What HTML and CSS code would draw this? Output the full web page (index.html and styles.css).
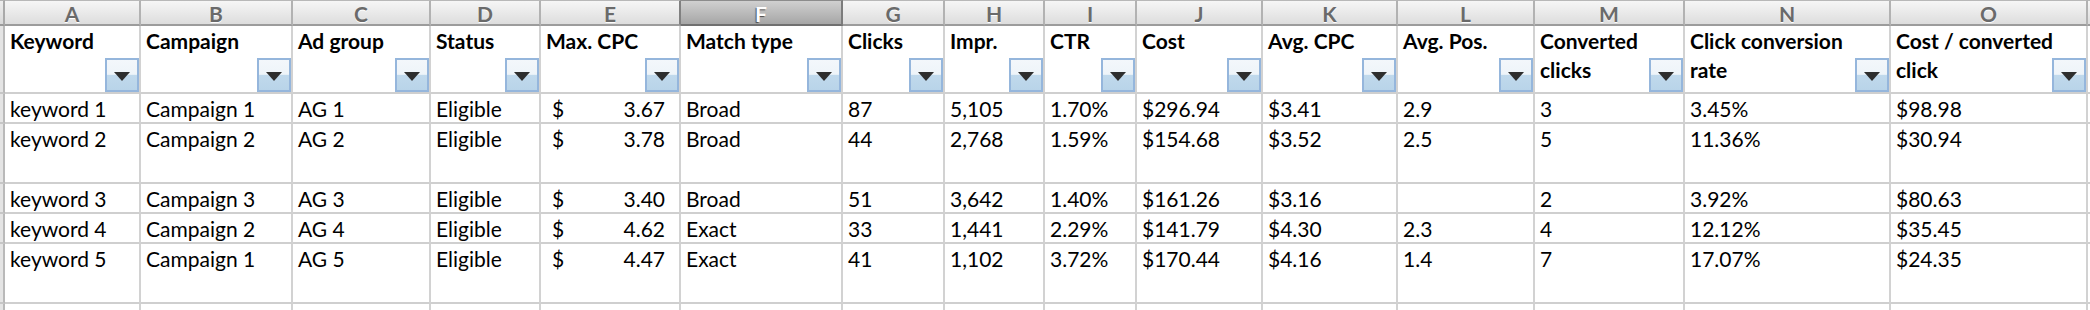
FILE: index.html
```html
<!DOCTYPE html>
<html>
<head>
<meta charset="utf-8">
<link rel="stylesheet" href="styles.css">
<title>Keywords</title>
</head>
<body>
<div class="sheet">
  <!-- column letters -->
  <div class="corner"></div>
  <div class="L">A</div><div class="L">B</div><div class="L">C</div><div class="L">D</div><div class="L pre">E</div>
  <div class="L sel">F</div><div class="L">G</div><div class="L">H</div><div class="L">I</div><div class="L">J</div>
  <div class="L">K</div><div class="L">L</div><div class="L">M</div><div class="L">N</div><div class="L">O</div><div class="L end"></div>

  <!-- header row -->
  <div class="s"></div>
  <div class="h"><span class="ht">Keyword</span><span class="dd"><svg width="16" height="9" viewBox="0 0 16 9"><polygon points="0,0 16,0 8,9" /></svg></span></div>
  <div class="h"><span class="ht">Campaign</span><span class="dd"><svg width="16" height="9" viewBox="0 0 16 9"><polygon points="0,0 16,0 8,9" /></svg></span></div>
  <div class="h"><span class="ht">Ad group</span><span class="dd"><svg width="16" height="9" viewBox="0 0 16 9"><polygon points="0,0 16,0 8,9" /></svg></span></div>
  <div class="h"><span class="ht">Status</span><span class="dd"><svg width="16" height="9" viewBox="0 0 16 9"><polygon points="0,0 16,0 8,9" /></svg></span></div>
  <div class="h"><span class="ht">Max. CPC</span><span class="dd"><svg width="16" height="9" viewBox="0 0 16 9"><polygon points="0,0 16,0 8,9" /></svg></span></div>
  <div class="h"><span class="ht">Match type</span><span class="dd"><svg width="16" height="9" viewBox="0 0 16 9"><polygon points="0,0 16,0 8,9" /></svg></span></div>
  <div class="h"><span class="ht">Clicks</span><span class="dd"><svg width="16" height="9" viewBox="0 0 16 9"><polygon points="0,0 16,0 8,9" /></svg></span></div>
  <div class="h"><span class="ht">Impr.</span><span class="dd"><svg width="16" height="9" viewBox="0 0 16 9"><polygon points="0,0 16,0 8,9" /></svg></span></div>
  <div class="h"><span class="ht">CTR</span><span class="dd"><svg width="16" height="9" viewBox="0 0 16 9"><polygon points="0,0 16,0 8,9" /></svg></span></div>
  <div class="h"><span class="ht">Cost</span><span class="dd"><svg width="16" height="9" viewBox="0 0 16 9"><polygon points="0,0 16,0 8,9" /></svg></span></div>
  <div class="h"><span class="ht">Avg. CPC</span><span class="dd"><svg width="16" height="9" viewBox="0 0 16 9"><polygon points="0,0 16,0 8,9" /></svg></span></div>
  <div class="h"><span class="ht">Avg. Pos.</span><span class="dd"><svg width="16" height="9" viewBox="0 0 16 9"><polygon points="0,0 16,0 8,9" /></svg></span></div>
  <div class="h"><span class="ht">Converted<br>clicks</span><span class="dd"><svg width="16" height="9" viewBox="0 0 16 9"><polygon points="0,0 16,0 8,9" /></svg></span></div>
  <div class="h"><span class="ht">Click conversion<br>rate</span><span class="dd"><svg width="16" height="9" viewBox="0 0 16 9"><polygon points="0,0 16,0 8,9" /></svg></span></div>
  <div class="h"><span class="ht">Cost / converted<br>click</span><span class="dd"><svg width="16" height="9" viewBox="0 0 16 9"><polygon points="0,0 16,0 8,9" /></svg></span></div>
  <div class="c end"></div>

  <!-- row 1 -->
  <div class="s"></div>
  <div class="c">keyword 1</div><div class="c">Campaign 1</div><div class="c">AG 1</div><div class="c">Eligible</div>
  <div class="c acc"><span>$</span><span>3.67</span></div>
  <div class="c">Broad</div><div class="c">87</div><div class="c">5,105</div><div class="c">1.70%</div><div class="c">$296.94</div>
  <div class="c">$3.41</div><div class="c">2.9</div><div class="c">3</div><div class="c">3.45%</div><div class="c">$98.98</div><div class="c end"></div>

  <!-- row 2 -->
  <div class="s"></div>
  <div class="c">keyword 2</div><div class="c">Campaign 2</div><div class="c">AG 2</div><div class="c">Eligible</div>
  <div class="c acc"><span>$</span><span>3.78</span></div>
  <div class="c">Broad</div><div class="c">44</div><div class="c">2,768</div><div class="c">1.59%</div><div class="c">$154.68</div>
  <div class="c">$3.52</div><div class="c">2.5</div><div class="c">5</div><div class="c">11.36%</div><div class="c">$30.94</div><div class="c end"></div>

  <!-- row 3 -->
  <div class="s"></div>
  <div class="c">keyword 3</div><div class="c">Campaign 3</div><div class="c">AG 3</div><div class="c">Eligible</div>
  <div class="c acc"><span>$</span><span>3.40</span></div>
  <div class="c">Broad</div><div class="c">51</div><div class="c">3,642</div><div class="c">1.40%</div><div class="c">$161.26</div>
  <div class="c">$3.16</div><div class="c"></div><div class="c">2</div><div class="c">3.92%</div><div class="c">$80.63</div><div class="c end"></div>

  <!-- row 4 -->
  <div class="s"></div>
  <div class="c">keyword 4</div><div class="c">Campaign 2</div><div class="c">AG 4</div><div class="c">Eligible</div>
  <div class="c acc"><span>$</span><span>4.62</span></div>
  <div class="c">Exact</div><div class="c">33</div><div class="c">1,441</div><div class="c">2.29%</div><div class="c">$141.79</div>
  <div class="c">$4.30</div><div class="c">2.3</div><div class="c">4</div><div class="c">12.12%</div><div class="c">$35.45</div><div class="c end"></div>

  <!-- row 5 -->
  <div class="s"></div>
  <div class="c">keyword 5</div><div class="c">Campaign 1</div><div class="c">AG 5</div><div class="c">Eligible</div>
  <div class="c acc"><span>$</span><span>4.47</span></div>
  <div class="c">Exact</div><div class="c">41</div><div class="c">1,102</div><div class="c">3.72%</div><div class="c">$170.44</div>
  <div class="c">$4.16</div><div class="c">1.4</div><div class="c">7</div><div class="c">17.07%</div><div class="c">$24.35</div><div class="c end"></div>

  <!-- partial row -->
  <div class="s last"></div>
  <div class="c last"></div><div class="c last"></div><div class="c last"></div><div class="c last"></div><div class="c last"></div>
  <div class="c last"></div><div class="c last"></div><div class="c last"></div><div class="c last"></div><div class="c last"></div>
  <div class="c last"></div><div class="c last"></div><div class="c last"></div><div class="c last"></div><div class="c last"></div><div class="c last end"></div>
</div>
</body>
</html>
```
FILE: styles.css
```css
html, body {
  margin: 0;
  padding: 0;
  background: #ffffff;
}

.sheet {
  display: grid;
  grid-template-columns: 5px 136px 152px 138px 110px 140px 162px 102px 100px 92px 126px 135px 137px 150px 206px 197px 2px;
  grid-template-rows: 26px 68px 30px 60px 30px 30px 60px 6px;
  font-family: Lato, "Liberation Sans", sans-serif;
  font-size: 21px;
  color: #000;
}

.sheet > div {
  box-sizing: border-box;
  min-width: 0;
}

/* column letter row */
.corner {
  background: linear-gradient(#eeeeee, #d8d8d8);
  border-top: 1px solid #b4b4b4;
  border-right: 2px solid #a9a9a9;
  border-bottom: 2px solid #9a9a9a;
}

.L {
  background: linear-gradient(#f6f6f6, #dddddd);
  border-top: 1px solid #b8b8b8;
  border-right: 2px solid #b2b2b2;
  border-bottom: 2px solid #9c9c9c;
  text-align: center;
  font-weight: 700;
  color: #6a6a6a;
  text-shadow: 0 1px 0 #ffffff;
  line-height: 22px;
  padding-top: 2px;
  overflow: hidden;
}

.L.pre {
  border-right-color: #808080;
}

.L.sel {
  background: linear-gradient(#d0d0d0, #a6a6a6);
  color: #ffffff;
  text-shadow: -1px 1px 1px #4a4a4a;
  border-right: 2px solid #7c7c7c;
  border-bottom: 2px solid #707070;
  border-top-color: #8c8c8c;
}

.L.end {
  border-right: none;
}

/* row header strip */
.s {
  background: #e4e4e4;
  border-right: 2px solid #b9b9b9;
  border-bottom: 2px solid #c6c6c6;
}

.s.last {
  border-bottom: none;
}

/* header cells */
.h {
  display: flex;
  align-items: flex-start;
  padding-left: 5px;
  font-weight: 700;
  line-height: 29px;
  border-right: 2px solid #d2d2d2;
  border-bottom: 2px solid #cfcfcf;
  white-space: nowrap;
}

.ht {
  flex: 1 1 0;
  min-width: 0;
}

.dd {
  flex: none;
  align-self: flex-end;
  width: 34px;
  height: 34px;
  box-sizing: border-box;
  border: 2px solid #95b6dc;
  background: linear-gradient(#f3f7fb 0%, #eef4f9 48%, #c0d9ec 50%, #b9d4e9 100%);
  display: flex;
  align-items: center;
  justify-content: center;
  padding-top: 2px;
}

.dd svg {
  display: block;
}

.dd polygon {
  fill: #2e2e2e;
}

/* data cells */
.c {
  padding: 1px 4px 0 5px;
  line-height: 28px;
  white-space: nowrap;
  border-right: 2px solid #d2d2d2;
  border-bottom: 2px solid #cfcfcf;
}

.c.acc {
  display: flex;
  justify-content: space-between;
  padding-left: 11px;
  padding-right: 14px;
}

.c.last {
  border-bottom: none;
}

.end {
  border-right: none;
}
```
